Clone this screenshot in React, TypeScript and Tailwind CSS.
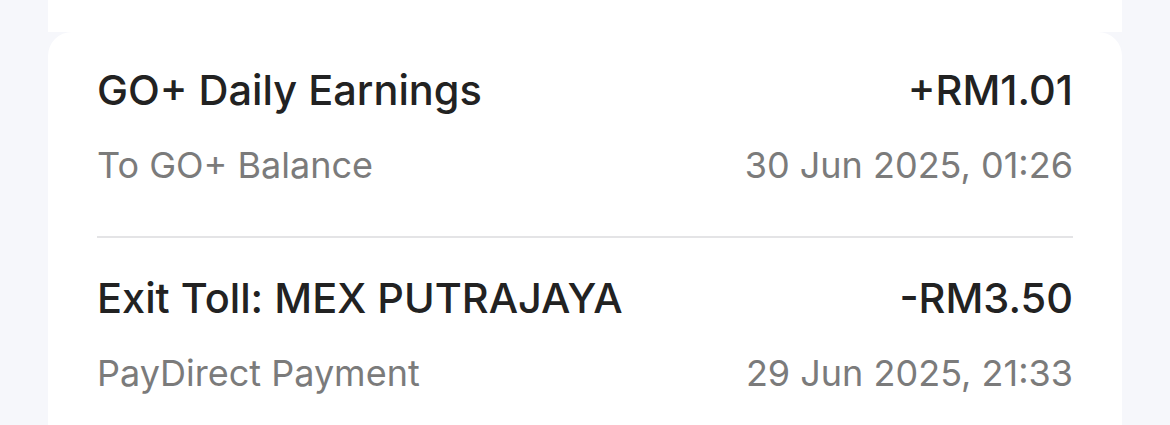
import React from 'react';

// 交易記錄
interface Txn {
  title: string;
  amount: string;
  note: string;
  time: string;
}

const TXNS: Txn[] = [
  { title: 'GO+ Daily Earnings', amount: '+RM1.01', note: 'To GO+ Balance', time: '30 Jun 2025, 01:26' },
  { title: 'Exit Toll: MEX PUTRAJAYA', amount: '-RM3.50', note: 'PayDirect Payment', time: '29 Jun 2025, 21:33' },
];

const font = { fontFamily: 'Inter, "Noto Sans", sans-serif' };

function TxnRow({ txn, first }: { txn: Txn; first: boolean }) {
  return (
    <div className={first ? 'pt-[34px] pb-[49px]' : 'pt-[36px] pb-[49px]'}>
      <div className="flex items-center justify-between text-[41.5px] leading-[48px] font-medium text-[#222222]">
        <span>{txn.title}</span>
        <span>{txn.amount}</span>
      </div>
      <div className="mt-[29px] flex items-center justify-between text-[36px] leading-[44px] text-[#7b7b7b]">
        <span>{txn.note}</span>
        <span>{txn.time}</span>
      </div>
    </div>
  );
}

export default function App() {
  return (
    <div className="w-[1170px] h-[425px] overflow-hidden bg-[#f6f7fb] px-12" style={font}>
      {/* 上一張卡片的底部 */}
      <div className="h-8 bg-white" />
      {/* 交易列表卡片 */}
      <div className="bg-white rounded-t-[24px] px-[49px] min-h-[500px]">
        {TXNS.map((t, i) => (
          <React.Fragment key={t.title}>
            {i > 0 && <div className="h-[2px] bg-[#e4e4e6]" />}
            <TxnRow txn={t} first={i === 0} />
          </React.Fragment>
        ))}
      </div>
    </div>
  );
}
